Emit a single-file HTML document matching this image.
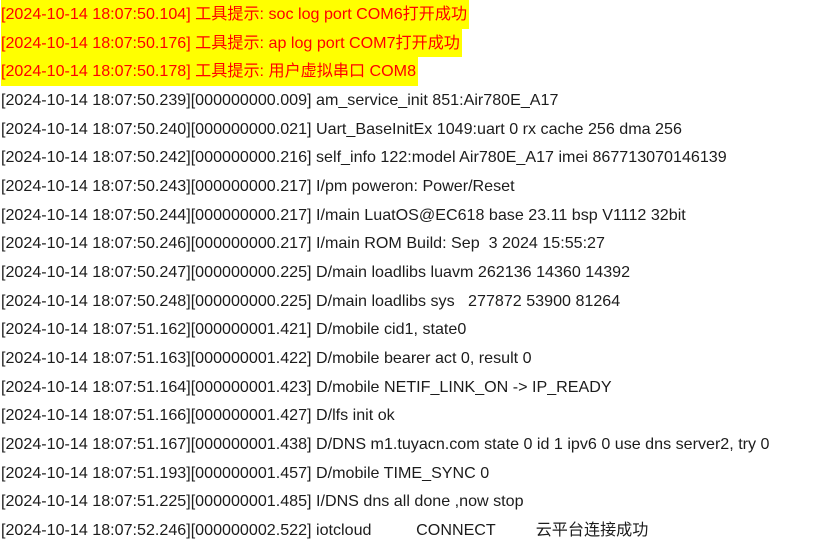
<!DOCTYPE html>
<html><head><meta charset="utf-8"><style>
body{margin:0;background:#fff;width:823px;height:551px;overflow:hidden}
.l{height:28.67px;line-height:28.67px;white-space:pre;font-family:"Liberation Sans","Noto Sans CJK SC",sans-serif;font-size:16.1px;color:#1c1c1c;padding-left:1px}
.y span{display:inline-block;background:#ffff00;color:#ff0000;height:28.67px;padding-right:2px}
</style></head><body>
<div class="l y"><span>[2024-10-14 18:07:50.104] 工具提示: soc log port COM6打开成功</span></div>
<div class="l y"><span>[2024-10-14 18:07:50.176] 工具提示: ap log port COM7打开成功</span></div>
<div class="l y"><span>[2024-10-14 18:07:50.178] 工具提示: 用户虚拟串口 COM8</span></div>
<div class="l">[2024-10-14 18:07:50.239][000000000.009] am_service_init 851:Air780E_A17</div>
<div class="l">[2024-10-14 18:07:50.240][000000000.021] Uart_BaseInitEx 1049:uart 0 rx cache 256 dma 256</div>
<div class="l">[2024-10-14 18:07:50.242][000000000.216] self_info 122:model Air780E_A17 imei 867713070146139</div>
<div class="l">[2024-10-14 18:07:50.243][000000000.217] I/pm poweron: Power/Reset</div>
<div class="l">[2024-10-14 18:07:50.244][000000000.217] I/main LuatOS@EC618 base 23.11 bsp V1112 32bit</div>
<div class="l">[2024-10-14 18:07:50.246][000000000.217] I/main ROM Build: Sep  3 2024 15:55:27</div>
<div class="l">[2024-10-14 18:07:50.247][000000000.225] D/main loadlibs luavm 262136 14360 14392</div>
<div class="l">[2024-10-14 18:07:50.248][000000000.225] D/main loadlibs sys   277872 53900 81264</div>
<div class="l">[2024-10-14 18:07:51.162][000000001.421] D/mobile cid1, state0</div>
<div class="l">[2024-10-14 18:07:51.163][000000001.422] D/mobile bearer act 0, result 0</div>
<div class="l">[2024-10-14 18:07:51.164][000000001.423] D/mobile NETIF_LINK_ON -&gt; IP_READY</div>
<div class="l">[2024-10-14 18:07:51.166][000000001.427] D/lfs init ok</div>
<div class="l">[2024-10-14 18:07:51.167][000000001.438] D/DNS m1.tuyacn.com state 0 id 1 ipv6 0 use dns server2, try 0</div>
<div class="l">[2024-10-14 18:07:51.193][000000001.457] D/mobile TIME_SYNC 0</div>
<div class="l">[2024-10-14 18:07:51.225][000000001.485] I/DNS dns all done ,now stop</div>
<div class="l">[2024-10-14 18:07:52.246][000000002.522] iotcloud          CONNECT         云平台连接成功</div>
</body></html>
